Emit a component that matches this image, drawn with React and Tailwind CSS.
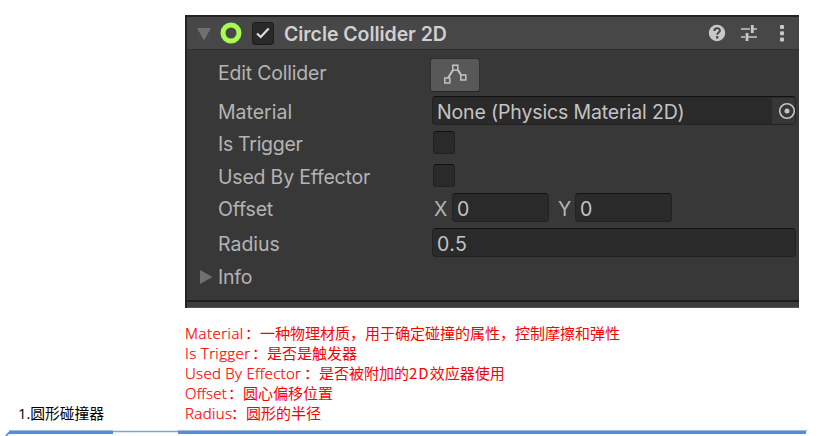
import React from "react";

function Field({ className = "", children }) {
  return (
    <div className={`flex h-[29px] items-center rounded-[4px] border border-[#222222] border-t-[#111111] bg-[#2a2a2a] pl-[4px] text-[#c4c4c4] ${className}`}>
      {children}
    </div>
  );
}

function Label({ className = "", children }) {
  return <div className={`w-[213px] shrink-0 whitespace-nowrap ${className}`}>{children}</div>;
}

function Checkbox() {
  return <div className="ml-[2px] h-[23px] w-[22px] rounded-[3px] border border-[#222222] border-t-[#111111] bg-[#2a2a2a]" />;
}

function Header() {
  return (
    <div className="flex h-[35px] items-center border-b border-[#303030] border-t-2 border-t-[#242424] bg-[#474747]">
      <svg className="ml-[9px] mt-[2px] shrink-0" width="16" height="14" viewBox="0 0 16 14">
        <path d="M1 1H15L8 13.5Z" fill="#707070" />
      </svg>
      <svg className="ml-[8px] shrink-0" width="22" height="22" viewBox="0 0 22 22">
        <circle cx="11" cy="11" r="8" fill="none" stroke="#a8fb52" strokeWidth="5" />
      </svg>
      <div className="ml-[10px] flex h-[23px] w-[22px] shrink-0 items-center justify-center rounded-[3px] border border-[#1c1c1c] bg-[#292929]">
        <svg width="16" height="14" viewBox="0 0 16 14" className="shrink-0">
          <path d="M2 7.5L5.7 11L13.7 2.5" fill="none" stroke="#dedede" strokeWidth="2.2" />
        </svg>
      </div>
      <div className="ml-[10px] mt-[3px] w-[421px] whitespace-nowrap text-[19.5px] font-semibold tracking-[-0.06px] text-[#d0d0d0]">
        Circle Collider 2D
      </div>
      <svg className="ml-[3px] shrink-0" width="18" height="18" viewBox="0 0 18 18">
        <circle cx="9" cy="9" r="8.2" fill="#c8c8c8" />
        <path d="M6.3 7C6.3 3.2 11.9 3.4 11.9 6.6C11.9 8.6 9.2 8.4 9.2 10.8" fill="none" stroke="#474747" strokeWidth="2" />
        <rect x="8" y="12.1" width="2.4" height="2.4" fill="#474747" />
      </svg>
      <svg className="ml-[14px] shrink-0" width="18" height="18" viewBox="0 0 18 18" fill="none" stroke="#c8c8c8">
        <path d="M1 5H10M13 5H17M1 13H5M8 13H17" strokeWidth="1.7" />
        <path d="M12.3 1V9M7 9V17" strokeWidth="2.8" />
      </svg>
      <svg className="ml-[21px] shrink-0" width="6" height="18" viewBox="0 0 6 18" fill="#c8c8c8">
        <rect x="1" y="1" width="4" height="4" rx="1" />
        <rect x="1" y="7.2" width="4" height="4" rx="1" />
        <rect x="1" y="13.4" width="4" height="4" rx="1" />
      </svg>
    </div>
  );
}

function Inspector() {
  return (
    <section className="ml-[185px] flex h-[293px] w-[614px] flex-col border-l-2 border-[#242424] bg-[#383838] text-[19.5px] tracking-[-0.2px] text-[#b4b4b4]">
      <Header />
      <div className="mt-[8px] flex h-[34px] items-center pl-[31px]">
        <Label className="-mt-[2px]">Edit Collider</Label>
        <div className="-ml-px flex h-[34px] w-[50px] items-center justify-center rounded-[3px] border border-[#303030] border-b-[#242424] bg-[#585858]">
          <svg width="25" height="22" viewBox="0 0 25 22" fill="none" stroke="#c4c4c4" strokeWidth="1.5">
            <path d="M5 14L10 6M15 6L18 11" strokeWidth="2" />
            <rect x="1.8" y="14" width="5" height="5" />
            <rect x="9.8" y="1.2" width="5" height="5" />
            <rect x="17.8" y="11" width="5" height="5" />
          </svg>
        </div>
      </div>
      <div className="mt-[4px] flex h-[29px] items-center pl-[31px]">
        <Label className="mt-[4px] tracking-[0px]">Material</Label>
        <Field className="ml-[1px] w-[364px] justify-between">
          <span className="mt-[4px] whitespace-nowrap tracking-[-0.14px]">None (Physics Material 2D)</span>
          <span className="flex h-[26px] w-[23px] shrink-0 items-center justify-end bg-[#373737]">
            <svg width="18" height="18" viewBox="0 0 18 18" className="-mr-px shrink-0">
              <circle cx="9" cy="9" r="7.3" fill="none" stroke="#c4c4c4" strokeWidth="1.6" />
              <circle cx="9" cy="9" r="2.5" fill="#c4c4c4" />
            </svg>
          </span>
        </Field>
      </div>
      <div className="mt-[6px] flex h-[23px] items-center pl-[31px]">
        <Label className="mt-[5px] tracking-[-0.3px]">Is Trigger</Label>
        <Checkbox />
      </div>
      <div className="mt-[10px] flex h-[23px] items-center pl-[31px]">
        <Label className="mt-[5px]">Used By Effector</Label>
        <Checkbox />
      </div>
      <div className="mt-[6px] flex h-[29px] items-center pl-[31px]">
        <Label className="mt-[5px]">Offset</Label>
        <span className="ml-[3px] mt-[4px] w-[18px]">X</span>
        <Field className="w-[97px] pt-[4px]">0</Field>
        <span className="ml-[9px] mt-[4px] w-[17px]">Y</span>
        <Field className="w-[97px] pt-[4px]">0</Field>
      </div>
      <div className="mt-[6px] flex h-[29px] items-center pl-[31px]">
        <Label className="mt-[5px] tracking-[0px]">Radius</Label>
        <Field className="ml-[1px] w-[364px] pt-[4px] tracking-[0.4px]">0.5</Field>
      </div>
      <div className="mt-[5px] flex h-[29px] items-center pl-[12px]">
        <svg width="14" height="16" viewBox="0 0 14 16" className="shrink-0">
          <path d="M1 1V15L13.5 8Z" fill="#707070" />
        </svg>
        <span className="ml-[5px] mt-[3px]">Info</span>
      </div>
      <div className="mt-auto h-[8px] border-b border-t-2 border-b-[#555555] border-t-[#202020] bg-[#3d3d3d]" />
    </section>
  );
}

const notes = [
  ["Material", "一种物理材质，用于确定碰撞的属性，控制摩擦和弹性", "w-[60px] tracking-[0.5px]"],
  ["Is Trigger", "是否是触发器", "w-[67px] tracking-[0.4px]"],
  ["Used By Effector", "是否被附加的2D效应器使用", "w-[119px] tracking-[0.3px]"],
  ["Offset", "圆心偏移位置", "w-[43px] tracking-[0.2px]"],
  ["Radius", "圆形的半径", "w-[46px] tracking-[0.4px]"],
];

export default function App() {
  return (
    <main className="h-[436px] w-[824px] overflow-hidden bg-white pt-[15px] font-[Inter,sans-serif]">
      <Inspector />
      <div className="mt-[15px] flex h-[100px] items-end font-['Open_Sans','Noto_Sans_CJK_SC',sans-serif] text-[15px] leading-[20px]">
        <div className="w-[185px] whitespace-nowrap pl-[18px] text-[14.8px] tracking-[-0.05px] text-black">1.圆形碰撞器</div>
        <div className="text-[#ff0000]">
          {notes.map(([name, text, cls]) => (
            <div key={name} className="flex h-[20px] whitespace-nowrap">
              <span className={`shrink-0 font-light [-webkit-text-stroke:0.25px_#ff0000] ${cls}`}>{name}</span>
              <span className="font-['Noto_Sans_CJK_SC',sans-serif]">
                ：{text.split("2D")[0]}
                {text.includes("2D") && <span className="tracking-[1px]">2D</span>}
                {text.split("2D")[1]}
              </span>
            </div>
          ))}
        </div>
      </div>
      <svg className="mt-[6px]" width="824" height="7" viewBox="0 0 824 7">
        <path d="M5 6.5L9.5 2H113V5H9L7 7Z" fill="#558ed5" />
        <path d="M9 1.5H113M178 1.5H807" stroke="#9bbce5" />
        <path d="M113 2.5H178" stroke="#7ba5dc" strokeWidth="1.5" />
        <path d="M178 2H806V5H178Z" fill="#558ed5" />
      </svg>
    </main>
  );
}
